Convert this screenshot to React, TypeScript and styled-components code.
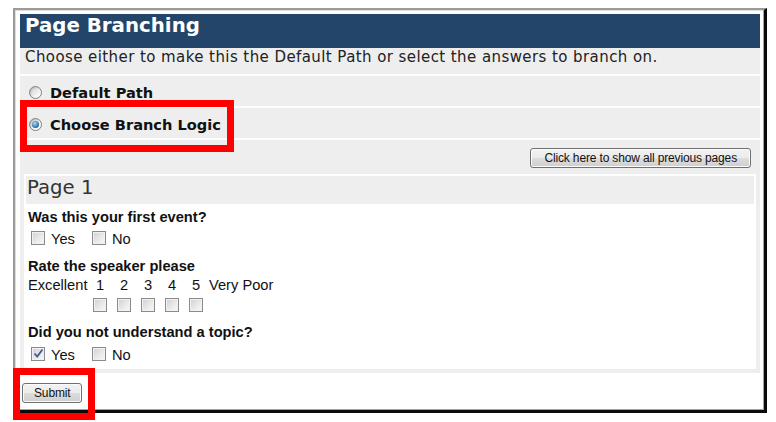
import React from "react";
import styled, { createGlobalStyle } from "styled-components";

const Global = createGlobalStyle`
  html, body {
    margin: 0;
    padding: 0;
    background: #fff;
  }
  * {
    box-sizing: border-box;
  }
`;

const Page = styled.div`
  position: relative;
  width: 776px;
  height: 422px;
  padding: 8px 0 0 13px;
  overflow: hidden;
`;

const Frame = styled.div`
  width: 754px;
  height: 405px;
  border-style: solid;
  border-width: 2px 3px 3px 2px;
  border-color: #9a9a9a #0a0a0a #0a0a0a #9a9a9a;
  box-shadow: inset -1px -1px 0 #a4a4a4, inset 1px 1px 0 #dedede;
  padding: 4px 4px 0 5px;
  background: #fff;
`;

const Header = styled.div`
  height: 34px;
  line-height: 34px;
  padding-left: 5px;
  background: #24456a;
  color: #fff;
  font: 700 19.8px "DejaVu Sans", Verdana, sans-serif;
`;

const InfoRow = styled.div`
  height: 26px;
  line-height: 26px;
  padding-left: 5px;
  background: #eeeeee;
  color: #222;
  font: 400 15px "DejaVu Sans", Verdana, sans-serif;
  letter-spacing: 0.42px;
  white-space: nowrap;
`;

const ChoiceRow = styled.div`
  display: flex;
  align-items: center;
  gap: 8px;
  height: 30px;
  margin-top: 2px;
  padding: 3px 0 0 9px;
  background: #eeeeee;
`;

const Radio = styled.span<{ $on?: boolean }>`
  position: relative;
  width: 13px;
  height: 13px;
  border-radius: 50%;
  border: 1px solid #7f8183;
  background: linear-gradient(135deg, #cfcfcf, #f6f6f6 70%, #ffffff);
  box-shadow: inset 1px 1px 1px rgba(0, 0, 0, 0.12);
  &::after {
    content: "";
    display: ${(p) => (p.$on ? "block" : "none")};
    position: absolute;
    left: 2px;
    top: 2px;
    width: 7px;
    height: 7px;
    border-radius: 50%;
    background: radial-gradient(circle at 40% 35%, #b4dcf7 0%, #3c7fb1 55%, #1b456c 100%);
  }
`;

const ChoiceLabel = styled.span`
  color: #111;
  font: 700 14.6px "DejaVu Sans", Verdana, sans-serif;
`;

const PagesSection = styled.div`
  margin-top: 2px;
  padding: 8px 4px 4px 4px;
  background: #eeeeee;
`;

const ButtonBar = styled.div`
  display: flex;
  justify-content: flex-end;
  padding-right: 5px;
`;

const WinButton = styled.button<{ $pad?: number }>`
  height: 20px;
  padding: 0 ${(p) => p.$pad ?? 12}px;
  border: 1px solid #707070;
  border-radius: 3px;
  background: linear-gradient(#f2f2f2 0%, #ebebeb 49%, #dddddd 50%, #cfcfcf 100%);
  box-shadow: inset 0 0 0 1px #fcfcfc;
  color: #111;
  font: 400 12px "Liberation Sans", Arial, sans-serif;
  letter-spacing: -0.15px;
  line-height: 18px;
  white-space: nowrap;
`;

const PagePanel = styled.div`
  margin-top: 6px;
  height: 195px;
  padding: 2px;
  background: #fff;
`;

const PanelTitle = styled.div`
  height: 28px;
  line-height: 28px;
  padding-left: 1px;
  background: #eeeeee;
  color: #333;
  font: 400 19.7px "DejaVu Sans", Verdana, sans-serif;
`;

const Questions = styled.div`
  padding-left: 2px;
  font: 400 11pt "Liberation Sans", Arial, sans-serif;
  color: #111;
`;

const QTitle = styled.div<{ $mt: number }>`
  margin-top: ${(p) => p.$mt}px;
  line-height: 17px;
  font-weight: 700;
`;

const OptionRow = styled.div<{ $mt: number }>`
  display: flex;
  align-items: flex-start;
  margin-top: ${(p) => p.$mt}px;
  padding-left: 3px;
  height: 16px;
`;

const Option = styled.label`
  display: flex;
  align-items: flex-start;
  gap: 6px;
  margin-right: 17px;
  line-height: 17px;
`;

const Box = styled.span`
  position: relative;
  display: inline-block;
  width: 14px;
  height: 14px;
  border: 1px solid #8a8b8b;
  background: linear-gradient(135deg, #cfcfcf 0%, #e9e9e9 55%, #f8f8f8 100%);
  box-shadow: inset 0 0 0 1px #f1f1f1;
  flex: none;
  svg {
    position: absolute;
    left: 1px;
    top: 0px;
  }
`;

const Scale = styled.div<{ $mt: number }>`
  display: grid;
  grid-template-columns: 60px repeat(5, 24px) auto;
  margin-top: ${(p) => p.$mt}px;
  line-height: 17px;
`;

const ScaleCell = styled.span`
  display: flex;
  justify-content: center;
`;

const ScaleEnd = styled.span`
  padding-left: 1px;
`;

const SubmitBar = styled.div`
  padding: 10px 0 0 2px;
`;

const Callout = styled.div<{ $x: number; $y: number; $w: number; $h: number }>`
  position: absolute;
  left: ${(p) => p.$x}px;
  top: ${(p) => p.$y}px;
  width: ${(p) => p.$w}px;
  height: ${(p) => p.$h}px;
  border: 7px solid #ff0000;
  pointer-events: none;
`;

const Check = ({ on }: { on?: boolean }) => (
  <Box>
    {on && (
      <svg width="11" height="11" viewBox="0 0 11 11">
        <path d="M1.5 5.5 L4.2 8.5 L9.5 1.5" fill="none" stroke="#3e5a96" strokeWidth="1.8" />
      </svg>
    )}
  </Box>
);

const YesNo = ({ mt, yes }: { mt: number; yes?: boolean }) => (
  <OptionRow $mt={mt}>
    <Option>
      <Check on={yes} />
      <span>Yes</span>
    </Option>
    <Option>
      <Check />
      <span>No</span>
    </Option>
  </OptionRow>
);

export default function App() {
  return (
    <Page>
      <Global />
      <Frame>
        <Header>Page Branching</Header>
        <InfoRow>Choose either to make this the Default Path or select the answers to branch on.</InfoRow>
        <ChoiceRow>
          <Radio />
          <ChoiceLabel>Default Path</ChoiceLabel>
        </ChoiceRow>
        <ChoiceRow>
          <Radio $on />
          <ChoiceLabel>Choose Branch Logic</ChoiceLabel>
        </ChoiceRow>
        <PagesSection>
          <ButtonBar>
            <WinButton $pad={13}>Click here to show all previous pages</WinButton>
          </ButtonBar>
          <PagePanel>
            <PanelTitle>Page 1</PanelTitle>
            <Questions>
              <QTitle $mt={5}>Was this your first event?</QTitle>
              <YesNo mt={5} />
              <QTitle $mt={11}>Rate the speaker please</QTitle>
              <Scale $mt={2}>
                <span>Excellent</span>
                {[1, 2, 3, 4, 5].map((n) => (
                  <ScaleCell key={n}>{n}</ScaleCell>
                ))}
                <ScaleEnd>Very Poor</ScaleEnd>
              </Scale>
              <Scale $mt={4}>
                <span />
                {[1, 2, 3, 4, 5].map((n) => (
                  <ScaleCell key={n}>
                    <Check />
                  </ScaleCell>
                ))}
                <span />
              </Scale>
              <QTitle $mt={12}>Did you not understand a topic?</QTitle>
              <YesNo mt={6} yes />
            </Questions>
          </PagePanel>
        </PagesSection>
        <SubmitBar>
          <WinButton $pad={11}>Submit</WinButton>
        </SubmitBar>
      </Frame>
      <Callout $x={20} $y={100} $w={214} $h={52} />
      <Callout $x={13} $y={368} $w={82} $h={52} />
    </Page>
  );
}
